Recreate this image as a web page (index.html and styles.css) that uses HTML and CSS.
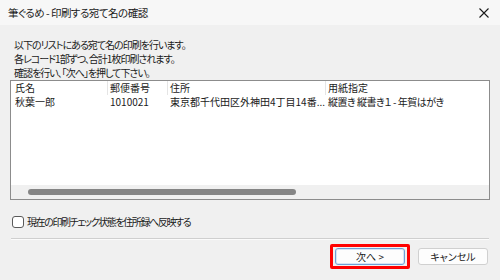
FILE: index.html
```html
<!DOCTYPE html>
<html lang="ja">
<head>
    <meta charset="UTF-8">
    <title>筆ぐるめ - 印刷する宛て名の確認</title>
    <link rel="stylesheet" href="styles.css">
</head>
<body>
    <div class="window">
        <div class="titlebar">
            <span class="title">筆ぐるめ - 印刷する宛て名の確認</span>
            <svg class="close" width="10" height="10" viewBox="0 0 10 10">
                <path d="M0.5 0.5 L9.5 9.5 M9.5 0.5 L0.5 9.5" stroke="#1a1a1a" stroke-width="1.1"/>
            </svg>
        </div>
        <div class="content">
            <div class="message">
                <div>以下のリストにある宛て名の印刷を行います。</div>
                <div>各レコード1部ずつ、合計1枚印刷されます。</div>
                <div>確認を行い、「次へ」を押して下さい。</div>
            </div>
            <div class="listbox">
                <div class="row header">
                    <span class="col name">氏名</span>
                    <span class="col zip">郵便番号</span>
                    <span class="col addr">住所</span>
                    <span class="col paper">用紙指定</span>
                </div>
                <div class="row">
                    <span class="col name">秋葉一郎</span>
                    <span class="col zip">1010021</span>
                    <span class="col addr">東京都千代田区外神田4丁目14番...</span>
                    <span class="col paper">縦置き 縦書き１ - 年賀はがき</span>
                </div>
                <div class="filler"></div>
                <div class="hscroll"><div class="thumb"></div></div>
            </div>
            <label class="check">
                <span class="box"></span>
                <span class="check-label">現在の印刷チェック状態を住所録へ反映する</span>
            </label>
            <div class="separator"></div>
            <div class="buttons">
                <span class="highlight"><button class="btn default">次へ &gt;</button></span>
                <button class="btn">キャンセル</button>
            </div>
        </div>
    </div>
</body>
</html>
```
FILE: styles.css
```css
body {
    margin: 0;
    background: #f0f0f0;
    font-family: "Noto Sans CJK JP", "Noto Sans", sans-serif;
    font-feature-settings: "palt";
    font-size: 10px;
    color: #1a1a1a;
}
.window {
    width: 500px;
    height: 280px;
    display: flex;
    flex-direction: column;
}
.titlebar {
    height: 25px;
    background: #f7f7f7;
    display: flex;
    align-items: center;
    justify-content: space-between;
    padding: 0 11px 0 8px;
    font-size: 10.5px;
    letter-spacing: -0.5px;
}
.content {
    padding: 13px 10px 0 10px;
}
.message {
    padding-left: 4px;
    line-height: 14px;
    letter-spacing: -1px;
}
.listbox {
    height: 118px;
    border: 1px solid #8c8c8c;
    background: white;
    display: flex;
    flex-direction: column;
}
.row {
    display: flex;
    height: 14px;
    line-height: 14px;
    white-space: nowrap;
}
.col {
    overflow: hidden;
}
.name {
    width: 92px;
    padding-left: 4px;
}
.zip {
    width: 57px;
    padding-left: 3px;
}
.addr {
    width: 155px;
    padding-left: 3px;
}
.paper {
    flex: 1;
    padding-left: 3px;
    letter-spacing: -0.5px;
}
.header .col {
    border-right: 1px solid #e5e5e5;
}
.header .name, .header .zip, .header .addr {
    margin-right: -1px;
}
.header .paper {
    border-right: none;
    letter-spacing: 0;
}
.filler {
    flex: 1;
}
.hscroll {
    height: 14px;
    background: #f0f0f0;
    padding-top: 4px;
    box-sizing: border-box;
}
.thumb {
    margin-left: 17px;
    width: 268px;
    height: 6px;
    border-radius: 3px;
    background: #858585;
}
.check {
    display: flex;
    align-items: center;
    gap: 3px;
    margin-top: 15px;
    padding-left: 2px;
    height: 13px;
}
.check-label {
    letter-spacing: -1.4px;
}
.box {
    width: 10px;
    height: 10px;
    border: 1px solid #5a5a5a;
    border-radius: 3px;
    background: white;
}
.separator {
    margin: 10px 1px 0 1px;
    height: 1px;
    background: #cfcfcf;
    border-bottom: 1px solid #fbfbfb;
}
.buttons {
    display: flex;
    justify-content: flex-end;
    align-items: center;
    gap: 8px;
    margin-top: 4px;
    padding-right: 2px;
}
.highlight {
    display: flex;
    border: 3px solid #ff0000;
    border-radius: 2px;
    padding: 1px 2px;
}
.btn {
    width: 70px;
    height: 17px;
    padding: 0;
    font-family: inherit;
    font-size: 10px;
    font-feature-settings: "palt";
    color: #1a1a1a;
    background: #fdfdfd;
    border: 1px solid #d0d0d0;
    border-radius: 3px;
}
.btn.default {
    border-color: #6f9fd3;
    box-shadow: inset 0 0 0 1px #d6e6f6;
}
```
